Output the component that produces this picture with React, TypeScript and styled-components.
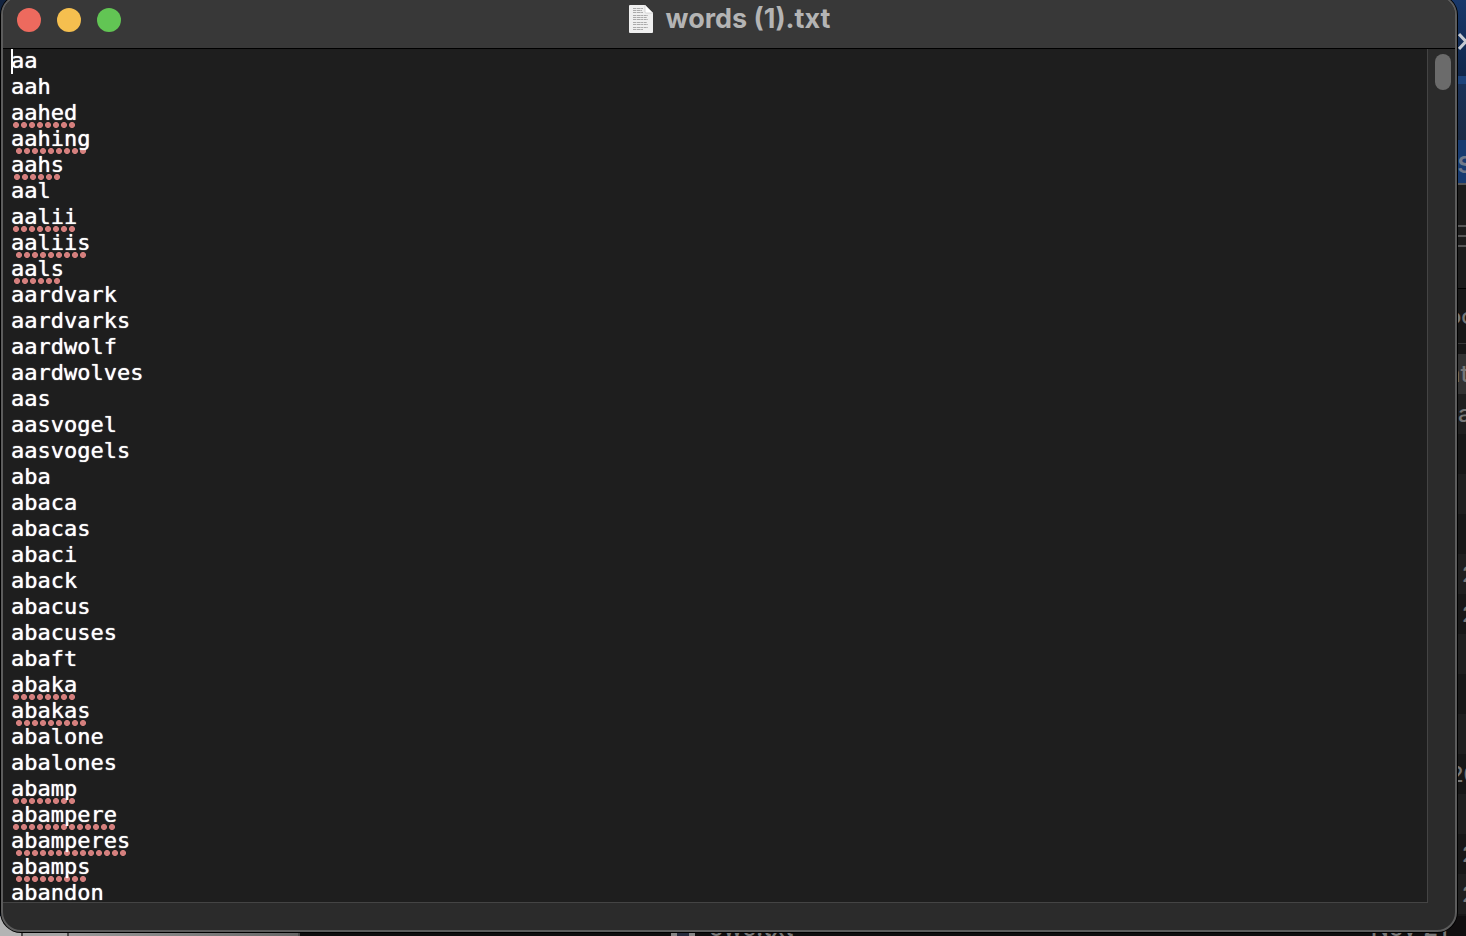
import React from "react";
import styled, { createGlobalStyle } from "styled-components";

const LINE = 26;
const GLYPH = 13.24;
const DOT_PITCH = 8;

const entries: { word: string; flagged?: boolean }[] = [
  { word: "aa" },
  { word: "aah" },
  { word: "aahed", flagged: true },
  { word: "aahing", flagged: true },
  { word: "aahs", flagged: true },
  { word: "aal" },
  { word: "aalii", flagged: true },
  { word: "aaliis", flagged: true },
  { word: "aals", flagged: true },
  { word: "aardvark" },
  { word: "aardvarks" },
  { word: "aardwolf" },
  { word: "aardwolves" },
  { word: "aas" },
  { word: "aasvogel" },
  { word: "aasvogels" },
  { word: "aba" },
  { word: "abaca" },
  { word: "abacas" },
  { word: "abaci" },
  { word: "aback" },
  { word: "abacus" },
  { word: "abacuses" },
  { word: "abaft" },
  { word: "abaka", flagged: true },
  { word: "abakas", flagged: true },
  { word: "abalone" },
  { word: "abalones" },
  { word: "abamp", flagged: true },
  { word: "abampere", flagged: true },
  { word: "abamperes", flagged: true },
  { word: "abamps", flagged: true },
  { word: "abandon" },
];

const GlobalStyle = createGlobalStyle`
  *, *::before, *::after { box-sizing: border-box; }
  body { margin: 0; background: #151515; overflow: hidden; }
`;

const Desktop = styled.div`
  position: relative;
  display: flex;
  flex-direction: column;
  height: 100vh;
  padding: 0 9px 4px 1px;
  overflow: hidden;
  background: #12233f;
  font-family: Inter, "Liberation Sans", sans-serif;
`;

/* Windows lying behind the editor, visible only along its edges. */
const SideWindow = styled.div`
  position: absolute;
  top: 0;
  right: 0;
  bottom: 0;
  width: 28px;
  display: flex;
  flex-direction: column;
`;

const Band = styled.div<{ $h: number; $bg: string; $text?: string; $size?: number }>`
  flex: 0 0 auto;
  display: flex;
  align-items: center;
  height: ${(p) => p.$h}px;
  padding-left: 20px;
  overflow: hidden;
  background: ${(p) => p.$bg};
  color: ${(p) => p.$text ?? "#777"};
  font-size: ${(p) => p.$size ?? 22}px;
  font-weight: 500;
  line-height: 26px;
  white-space: nowrap;

  svg {
    flex: none;
  }
`;

const CutLabel = styled.span<{ $shift: number }>`
  margin-left: ${(p) => p.$shift}px;
`;

const BackWindow = styled.div`
  position: absolute;
  left: 0;
  right: 0;
  bottom: 0;
  height: 20px;
  display: flex;
  background: #100e0f;
`;

const PalePane = styled.div<{ $w: number; $bg: string }>`
  width: ${(p) => p.$w}px;
  border-right: 2px solid #4c4c4c;
  background: ${(p) => p.$bg};
`;

const FileRow = styled.div`
  flex: 1;
  display: flex;
  justify-content: space-between;
  padding: 0 18px 0 371px;
  color: #777;
  font-size: 24px;
  font-weight: 500;
  line-height: 24px;
`;

const FileName = styled.span`
  display: flex;
  gap: 14px;
`;

const Thumb = styled.span`
  width: 24px;
  height: 20px;
  border: 6px solid #858585;
  border-bottom: 0;
  background: #252a3c;
`;

const EditorWindow = styled.main`
  position: relative;
  flex: 1;
  min-height: 0;
  display: flex;
  flex-direction: column;
  margin-top: -5px;
  overflow: hidden;
  border: 2px solid #5c5c5c;
  border-radius: 20px;
  background: #2b2b2b;
  box-shadow: 0 0 0 1px #000;
`;

const TitleBar = styled.header`
  display: grid;
  grid-template-columns: 1fr auto 1fr;
  align-items: center;
  height: 52px;
  padding: 3px 14px 9px;
  border-bottom: 1px solid #000;
  background: #383838;
`;

const Lights = styled.div`
  display: flex;
  gap: 16px;
`;

const Light = styled.button<{ $color: string }>`
  width: 24px;
  height: 24px;
  padding: 0;
  border: 0;
  border-radius: 50%;
  background: ${(p) => p.$color};
`;

const Title = styled.h1`
  display: flex;
  align-items: center;
  gap: 12px;
  margin: -2px 0 0;
  color: #b4b4b4;
  font-size: 27px;
  font-weight: 700;
  line-height: 32px;
`;

const Body = styled.div`
  flex: 1;
  min-height: 0;
  display: grid;
  grid-template-columns: 1fr 27px;
`;

const Page = styled.div`
  position: relative;
  display: grid;
  min-height: 0;
  overflow: hidden;
  border-right: 1px solid #444;
  border-bottom: 1px solid #444;
  background: #1e1e1e;
`;

const Marks = styled.div`
  grid-area: 1 / 1;
  min-height: 0;
  padding-left: 8px;
`;

const MarkLine = styled.div`
  display: flex;
  height: ${LINE}px;
  padding-top: 21px;
`;

const Dots = styled.span<{ $letters: number }>`
  flex: 0 0 auto;
  height: 6px;
  width: ${(p) => Math.floor((p.$letters * GLYPH) / DOT_PITCH) * DOT_PITCH}px;
  margin-left: ${(p) => Math.round(((p.$letters * GLYPH) % DOT_PITCH) / 2)}px;
  background: radial-gradient(circle at center, #d47f7d 60%, transparent 75%) 0 0 / 8px 6px;
  background: radial-gradient(circle closest-side, #d47f7d 85%, transparent 115%) 0 0 / 8px 6px;
`;

const Sheet = styled.textarea`
  grid-area: 1 / 1;
  position: relative;
  width: 100%;
  min-height: 0;
  margin: -1px 0 0;
  padding: 0 0 0 8px;
  border: 0;
  outline: 0;
  resize: none;
  overflow: hidden;
  background: transparent;
  color: #fff;
  font-family: "DejaVu Sans Mono", "Liberation Mono", monospace;
  font-size: 22px;
  line-height: ${LINE}px;
  text-shadow: 0 0 1px #fff;
  white-space: pre;
`;

const Caret = styled.span`
  position: absolute;
  top: 0;
  left: 8px;
  width: 2px;
  height: 25px;
  background: #fff;
`;

const ScrollTrack = styled.div`
  padding: 5px 0 0 7px;
`;

const ScrollThumb = styled.div`
  width: 16px;
  height: 36px;
  border-radius: 8px;
  background: #6b6b6b;
`;

const StatusStrip = styled.footer`
  height: 27px;
`;

const DocumentIcon = () => (
  <svg width="26" height="30" viewBox="0 0 26 30" aria-hidden="true">
    <path d="M2 1h15l8 8v19a1 1 0 0 1-1 1H2a1 1 0 0 1-1-1V2a1 1 0 0 1 1-1z" fill="#efefef" />
    <path d="M17 1v7a1 1 0 0 0 1 1h7z" fill="#fff" stroke="#bdbdbd" strokeWidth=".6" />
    <path
      d="M5 4.500h10M5 6.500h9M5 8.500h10M5 11.500h15M5 13.500h14M5 15.500h15M5 18.500h14M5 20.500h15M5 23.500h15M5 25.500h10"
      stroke="#aaa"
      strokeWidth="1"
      strokeDasharray="3 .6 4 .5 2 .6"
    />
  </svg>
);

export default function App() {
  return (
    <>
      <GlobalStyle />
      <Desktop>
        <SideWindow aria-hidden="true">
          <Band $h={76} $bg="linear-gradient(#19386a, #10264a)">
            <svg width="16" height="24" viewBox="0 0 16 24">
              <path d="M1 8l14 15M1 23l14-15" stroke="#c5cad2" strokeWidth="3" fill="none" />
            </svg>
          </Band>
          <Band $h={8} $bg="#1d437b" />
          <Band $h={56} $bg="linear-gradient(#1a3158, #1b2b45)" />
          <Band $h={43} $bg="linear-gradient(#183b70, #183b70)" $text="#71798a" $size={30}>
            <CutLabel $shift={-1}>s</CutLabel>
          </Band>
          <Band $h={2} $bg="#565656" />
          <Band $h={103} $bg="#1c1c1c">
            <svg width="10" height="24" viewBox="0 0 10 24">
              <path d="M0 1h10M0 11h10M0 21h10" stroke="#555" strokeWidth="2" />
            </svg>
          </Band>
          <Band $h={1} $bg="#000" />
          <Band $h={54} $bg="#171717">
            <CutLabel $shift={-10}>oc</CutLabel>
          </Band>
          <Band $h={1} $bg="#383838" />
          <Band $h={10} $bg="#171717" />
          <Band $h={40} $bg="#333" $size={24}>
            <CutLabel $shift={-12}>nt</CutLabel>
          </Band>
          <Band $h={40} $bg="#1f1f1f" $size={24}>
            <CutLabel $shift={0}>a</CutLabel>
          </Band>
          <Band $h={40} $bg="#171717" />
          <Band $h={40} $bg="#1f1f1f" />
          <Band $h={40} $bg="#171717" />
          <Band $h={40} $bg="#1f1f1f"><CutLabel $shift={4}>2</CutLabel></Band>
          <Band $h={40} $bg="#171717"><CutLabel $shift={4}>2</CutLabel></Band>
          <Band $h={40} $bg="#1f1f1f" />
          <Band $h={40} $bg="#171717" />
          <Band $h={40} $bg="#1f1f1f" />
          <Band $h={40} $bg="#171717"><CutLabel $shift={-8}>20</CutLabel></Band>
          <Band $h={40} $bg="#1f1f1f" />
          <Band $h={40} $bg="#171717"><CutLabel $shift={4}>2</CutLabel></Band>
          <Band $h={40} $bg="#1f1f1f"><CutLabel $shift={4}>2</CutLabel></Band>
          <Band $h={40} $bg="#171717" />
        </SideWindow>
        <BackWindow aria-hidden="true">
          <PalePane $w={23} $bg="#b4b4b4" />
          <PalePane $w={46} $bg="#a5a5a5" />
          <PalePane $w={231} $bg="linear-gradient(90deg, #999, #666)" />
          <FileRow>
            <FileName>
              <Thumb />
              ows.txt
            </FileName>
            <span>Nov 21</span>
          </FileRow>
        </BackWindow>

        <EditorWindow>
          <TitleBar>
            <Lights>
              <Light type="button" aria-label="Close" $color="#ed6a5e" />
              <Light type="button" aria-label="Minimize" $color="#f5bf4f" />
              <Light type="button" aria-label="Zoom" $color="#62c554" />
            </Lights>
            <Title>
              <DocumentIcon />
              words (1).txt
            </Title>
          </TitleBar>
          <Body>
            <Page>
              <Marks aria-hidden="true">
                {entries.map(({ word, flagged }) => (
                  <MarkLine key={word}>{flagged && <Dots $letters={word.length} />}</MarkLine>
                ))}
              </Marks>
              <Sheet
                aria-label="Document text"
                spellCheck={false}
                wrap="off"
                defaultValue={entries.map((e) => e.word).join("\n")}
              />
              <Caret />
            </Page>
            <ScrollTrack>
              <ScrollThumb />
            </ScrollTrack>
          </Body>
          <StatusStrip />
        </EditorWindow>
      </Desktop>
    </>
  );
}
